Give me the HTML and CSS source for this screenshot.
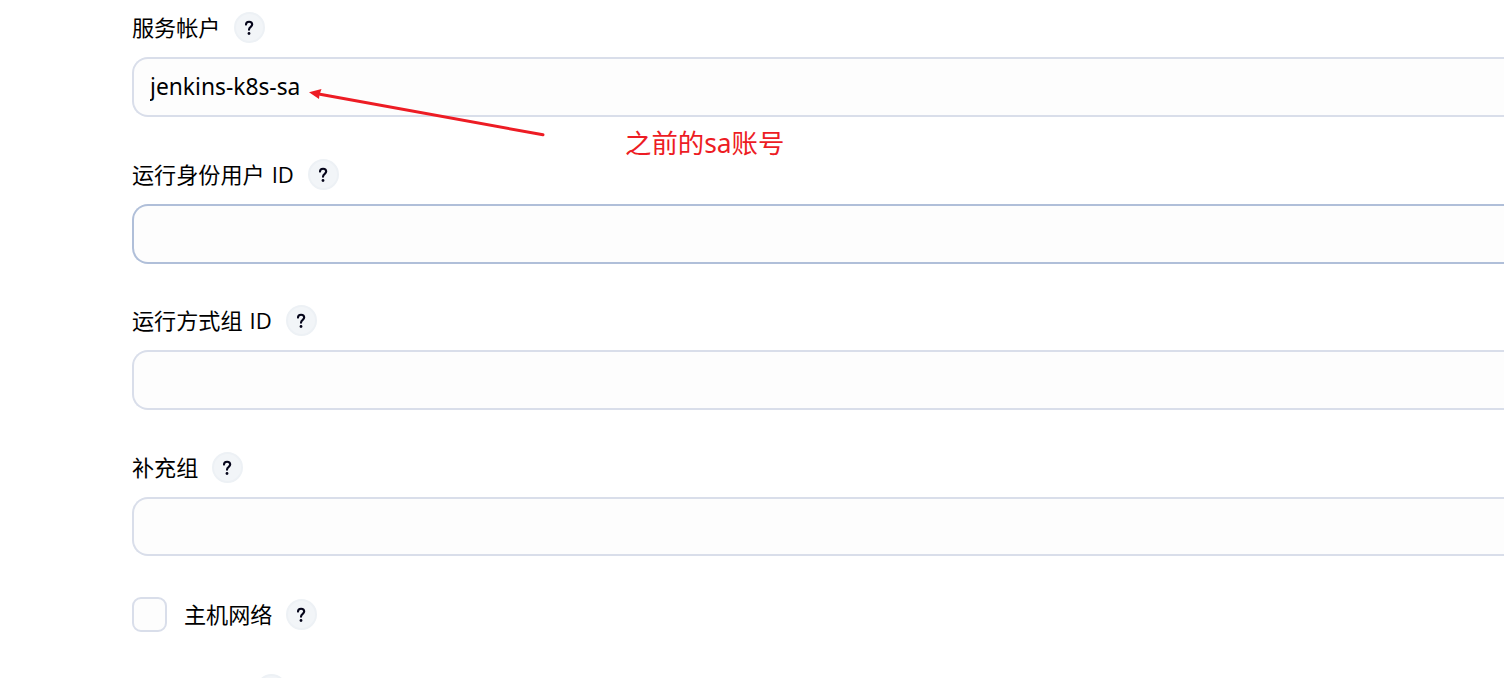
FILE: index.html
```
<!DOCTYPE html>
<html lang="zh-CN">
<head>
  <meta charset="UTF-8" />
  <meta name="viewport" content="width=device-width, initial-scale=1.0"/>
  <title>Pod Template</title>
  <link rel="stylesheet" href="styles.css">
</head>
<body>
  <form class="config">
    <div class="field">
      <div class="field-head">
        <label for="serviceAccount">服务帐户</label>
        <button type="button" class="help"><svg viewBox="0 0 31 31"><path d="M12 12.6C12 10.9 13.3 9.8 15.100 9.8S18.2 11 18.2 12.6C18.2 14.8 15 14.9 15 17.7"/><circle cx="15" cy="21.500" r="1.4"/></svg></button>
      </div>
      <input type="text" id="serviceAccount" value="jenkins-k8s-sa" spellcheck="false" />
    </div>

    <div class="field">
      <div class="field-head">
        <label for="runAsUser">运行身份用户 ID</label>
        <button type="button" class="help"><svg viewBox="0 0 31 31"><path d="M12 12.6C12 10.9 13.3 9.8 15.100 9.8S18.2 11 18.2 12.6C18.2 14.8 15 14.9 15 17.7"/><circle cx="15" cy="21.500" r="1.4"/></svg></button>
      </div>
      <input type="text" id="runAsUser" class="active" />
    </div>

    <div class="field">
      <div class="field-head">
        <label for="runAsGroup">运行方式组 ID</label>
        <button type="button" class="help"><svg viewBox="0 0 31 31"><path d="M12 12.6C12 10.9 13.3 9.8 15.100 9.8S18.2 11 18.2 12.6C18.2 14.8 15 14.9 15 17.7"/><circle cx="15" cy="21.500" r="1.4"/></svg></button>
      </div>
      <input type="text" id="runAsGroup" />
    </div>

    <div class="field">
      <div class="field-head">
        <label for="groups">补充组</label>
        <button type="button" class="help"><svg viewBox="0 0 31 31"><path d="M12 12.6C12 10.9 13.3 9.8 15.100 9.8S18.2 11 18.2 12.6C18.2 14.8 15 14.9 15 17.7"/><circle cx="15" cy="21.500" r="1.4"/></svg></button>
      </div>
      <input type="text" id="groups" />
    </div>

    <div class="check-row">
      <input type="checkbox" id="hostNetwork" />
      <label for="hostNetwork">主机网络</label>
      <button type="button" class="help"><svg viewBox="0 0 31 31"><path d="M12 12.6C12 10.9 13.3 9.8 15.100 9.8S18.2 11 18.2 12.6C18.2 14.8 15 14.9 15 17.7"/><circle cx="15" cy="21.500" r="1.4"/></svg></button>
    </div>

    <div class="next-row">
      <button type="button" class="help"></button>
    </div>
  </form>

  <!-- annotation over the form -->
  <svg class="arrow" viewBox="0 0 240 50">
    <path class="shaft" d="M12 6.300L235 46.800"/>
    <path class="tip" d="M1 4.300L13.500 1L11.500 6.500L11 11Z"/>
  </svg>
  <p class="note">之前的sa账号</p>
</body>
</html>
```

FILE: styles.css
```
:root {
  --border: #d9deea;
  --border-active: #b0bfd9;
  --field-bg: #fdfdfd;
  --text: #05051a;
  --red: #ed1c24;
}

* {
  box-sizing: border-box;
  margin: 0;
  padding: 0;
}

body {
  height: 678px;
  overflow: hidden;
  position: relative;
  font-family: "Noto Sans", "Noto Sans CJK SC", sans-serif;
  font-size: 22px;
  color: var(--text);
  background: #fff;
}

.config {
  padding: 12.3px 0 0 132px;
}

.field {
  margin-bottom: 41.65px;
}

.field-head {
  display: flex;
  align-items: center;
  gap: 14px;
  height: 31px;
  margin-bottom: 14px;
}

label {
  font-family: "Open Sans", "Noto Sans CJK SC", sans-serif;
  font-size: 22.1px;
  line-height: 31px;
  word-spacing: 1.4px;
  white-space: nowrap;
  color: #000;
}

.help {
  width: 31px;
  height: 31px;
  border: 2px solid #edf1f5;
  border-radius: 50%;
  background: #f2f5f8;
  flex-shrink: 0;
}

.help svg {
  display: block;
  width: 31px;
  height: 31px;
  margin: -2px;
}

.help path {
  fill: none;
  stroke: var(--text);
  stroke-width: 2.1;
  stroke-linecap: round;
}

.help circle {
  fill: var(--text);
}

/* the fields run off the right edge, so that side stays open */
input[type="text"] {
  display: block;
  width: 100%;
  height: 59.8px;
  padding: 0 16px 2px;
  border: 2px solid var(--border);
  border-right: none;
  border-radius: 16px 0 0 16px;
  background: var(--field-bg);
  color: #000;
  font-family: inherit;
  font-size: 22.8px;
  outline: none;
}

input[type="text"].active {
  border-color: var(--border-active);
}

.check-row {
  display: flex;
  align-items: center;
  height: 35px;
  margin-top: -1.1px;
}

.check-row input {
  appearance: none;
  width: 35px;
  height: 35px;
  margin-right: 17px;
  border: 2.5px solid var(--border);
  border-radius: 9px;
  background: var(--field-bg);
}

.check-row .help {
  margin-left: 14px;
}

.next-row {
  padding: 42px 0 0 124px;
}

.arrow {
  position: absolute;
  left: 308px;
  top: 88px;
  width: 240px;
  height: 50px;
}

.shaft {
  fill: none;
  stroke: var(--red);
  stroke-width: 3;
  stroke-linecap: round;
}

.tip {
  fill: var(--red);
}

.note {
  position: absolute;
  left: 625px;
  top: 124px;
  font-size: 26.4px;
  line-height: 38px;
  color: var(--red);
  white-space: nowrap;
}
```
